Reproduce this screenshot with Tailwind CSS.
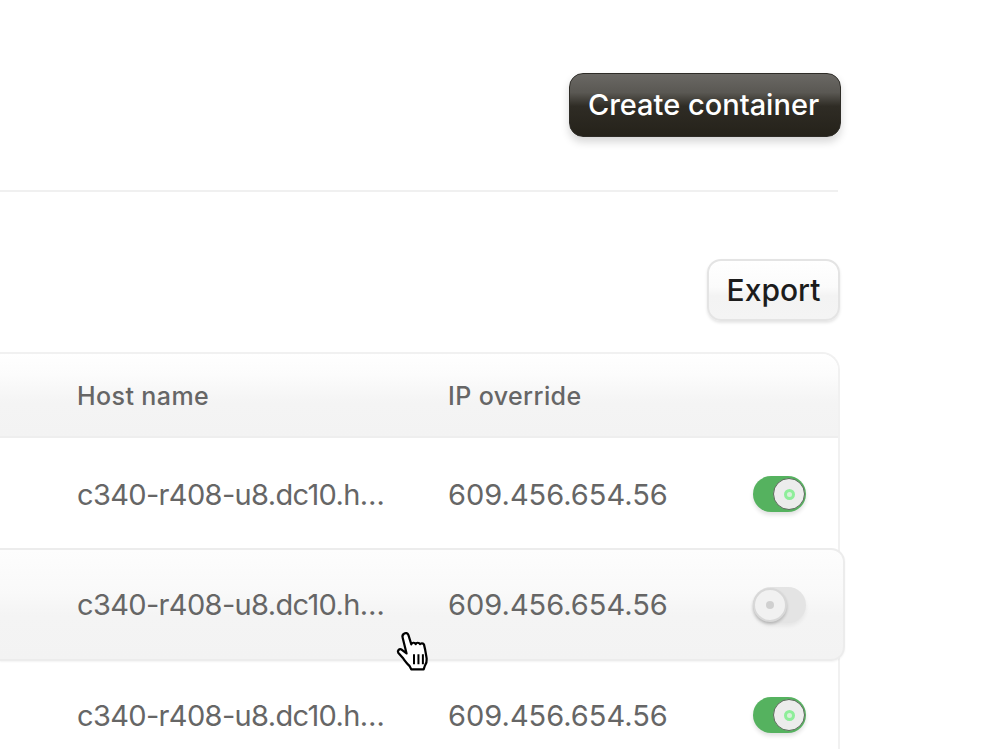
<!DOCTYPE html>
<html lang="en">
<head>
  <meta charset="UTF-8" />
  <title>Containers</title>
  <script src="https://cdn.jsdelivr.net/npm/@tailwindcss/browser@4"></script>
</head>
<body class="bg-white font-['Inter',sans-serif] overflow-hidden">
  <div class="relative h-[749px] w-[1000px] overflow-hidden pr-[160px]">

    <!-- Page header -->
    <div class="flex justify-end pt-[73px]">
      <button class="relative -mr-[1px] h-[64px] w-[272px] rounded-[14px] border border-[#2e2c27] bg-[linear-gradient(180deg,#6a6864_0%,#5a5853_30%,#2f2c25_52%,#25221a_100%)] pr-[3px] text-[29px] font-medium tracking-[0px] text-white shadow-[0_5px_8px_rgba(0,0,0,0.16)]">Create container</button>
    </div>
    <div class="mt-[53px] mr-[2px] h-[2px] bg-[#f0f0f0]"></div>

    <!-- Toolbar -->
    <div class="mt-[67px] flex justify-end">
      <button class="h-[62px] w-[133px] rounded-[14px] border-2 border-[#e4e4e4] bg-[linear-gradient(180deg,#ffffff_0%,#fbfbfb_45%,#f3f3f3_60%,#f4f4f4_100%)] text-[30px] font-medium text-[#1c1c1c] shadow-[0_2px_3px_rgba(0,0,0,0.1)]">Export</button>
    </div>

    <!-- Table -->
    <div class="mt-[31px] rounded-tr-[18px] border-t-2 border-r-2 border-[#f1f1f1]">
      <div class="flex h-[84px] items-center rounded-tr-[16px] border-b-2 border-[#eeeeee] bg-[linear-gradient(180deg,#ffffff_0%,#fcfcfc_25%,#f4f4f4_60%,#f3f3f3_100%)] pt-[3px] pl-[77px] text-[25px] font-medium tracking-[0.4px] text-[#666666]">
        <div class="w-[371px]">Host name</div>
        <div>IP override</div>
      </div>

      <div class="flex h-[110px] items-center pt-[2px] pl-[77px] text-[29px] text-[#666666]">
        <div class="w-[371px] pt-[2px] tracking-[-0.65px]">c340-r408-u8.dc10.h…</div>
        <div class="pt-[2px]">609.456.654.56</div>
        <div class="ml-auto mr-[32px] flex h-[36px] w-[53px] items-center justify-end rounded-full bg-[#55b25f] pr-[1px] shadow-[0_3px_4px_rgba(0,0,0,0.12)]">
          <div class="flex size-[32px] items-center justify-center rounded-full border border-[#5c6b5c] bg-[#ececec]">
            <div class="size-[11px] rounded-full border-[3px] border-[#8eee9a] bg-[#d8f0da]"></div>
          </div>
        </div>
      </div>

      <div class="-mr-[7px] flex h-[113px] items-center rounded-br-[14px] rounded-tr-[14px] border-y-2 border-r-2 border-[#ececec] bg-[linear-gradient(180deg,#fdfdfd_0%,#f9f9f9_40%,#f4f4f4_60%,#f3f3f3_100%)] pl-[77px] text-[29px] text-[#666666] shadow-[0_1px_2px_rgba(0,0,0,0.05)]">
        <div class="w-[371px] tracking-[-0.65px]">c340-r408-u8.dc10.h…</div>
        <div>609.456.654.56</div>
        <div class="ml-auto mr-[37px] flex h-[36px] w-[53px] items-center rounded-full bg-[#e4e4e4] shadow-[0_3px_4px_rgba(0,0,0,0.06)]">
          <div class="flex size-[34px] items-center justify-center rounded-full border-2 border-[#d8d8d8] bg-[#f1f1f1] shadow-[0_2px_3px_rgba(0,0,0,0.2)]">
            <div class="size-[8px] rounded-full bg-[#d0d0d0]"></div>
          </div>
        </div>
      </div>

      <div class="flex h-[110px] items-center pl-[77px] text-[29px] text-[#666666]">
        <div class="w-[371px] tracking-[-0.65px]">c340-r408-u8.dc10.h…</div>
        <div>609.456.654.56</div>
        <div class="ml-auto mr-[32px] mb-[2px] flex h-[36px] w-[53px] items-center justify-end rounded-full bg-[#55b25f] pr-[1px] shadow-[0_3px_4px_rgba(0,0,0,0.12)]">
          <div class="flex size-[32px] items-center justify-center rounded-full border border-[#5c6b5c] bg-[#ececec]">
            <div class="size-[11px] rounded-full border-[3px] border-[#8eee9a] bg-[#d8f0da]"></div>
          </div>
        </div>
      </div>
    </div>

    <!-- Pointer cursor -->
    <svg class="absolute left-[395px] top-[631px]" width="38" height="40" viewBox="0 0 34 36" fill="none">
      <path d="M8 2.500c1.500-1.300 3.400-.6 4 1.200l2.600 8.300c.3-1.700 3.200-2 3.900-.2.4-1.600 3.200-1.700 3.900.1.6-1.200 3.100-1.200 3.600.4 1.200 4.400 1.800 8.800 2.400 12.500.3 2.600-.5 4.700-1.700 6.700l-1 3H14.500l-1.500-3c-2.200-1.700-4.500-5-6.200-7.500L2.800 19.500c-1-1.700 1-4 3-2.800l4.500 3.500L6.800 6c-.5-1.400 0-2.700 1.200-3.500z" fill="#fff" stroke="#000" stroke-width="2" stroke-linejoin="round"/>
      <path d="M17 21v9M21 21v9M25 21v9" stroke="#000" stroke-width="1.800"/>
    </svg>
  </div>
</body>
</html>
